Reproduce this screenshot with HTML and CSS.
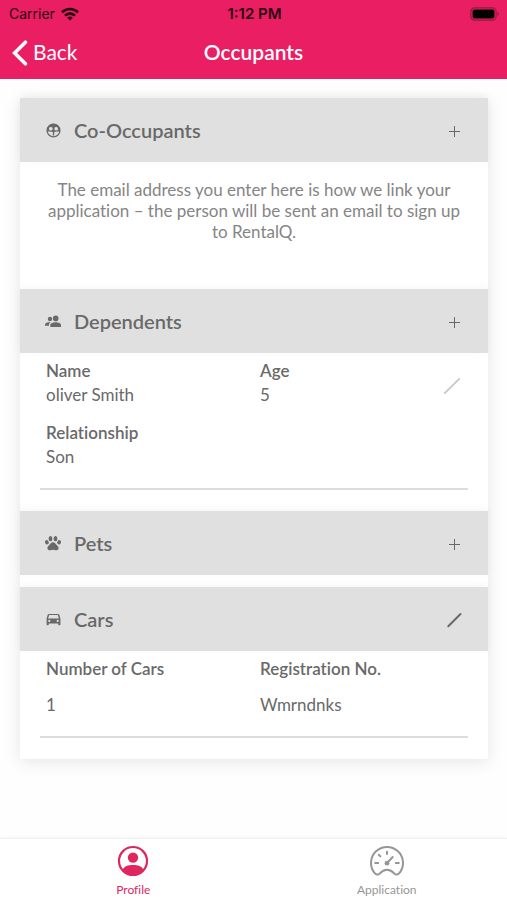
FILE: index.html
```html
<!DOCTYPE html>
<html lang="en">
<head>
<meta charset="utf-8">
<meta name="viewport" content="width=device-width, initial-scale=1">
<title>Occupants</title>
<link rel="stylesheet" href="styles.css">
</head>
<body>
<div class="app">
  <header class="top">
    <div class="status">
      <span class="carrier">Carrier
        <svg width="18" height="14" viewBox="0 0 18 14" aria-hidden="true"><g fill="none" stroke="currentColor" stroke-width="2.6"><path d="M1 5.2a11.5 11.5 0 0 1 16 0"/><path d="M4 8.6a7.2 7.2 0 0 1 10 0"/></g><path d="M9 13.6 6.2 10.8a4 4 0 0 1 5.6 0z" fill="currentColor"/></svg>
      </span>
      <span class="time">1:12 PM</span>
      <span class="battery"><svg width="30" height="14" viewBox="0 0 30 14" aria-hidden="true"><rect x=".9" y=".9" width="25.2" height="12.2" rx="3.6" fill="none" stroke="#8f1a42" stroke-width="1.2"/><rect x="2.6" y="2.6" width="21.8" height="8.8" rx="2" fill="#000"/><path d="M27.6 4.8a2.6 2.6 0 0 1 0 4.4z" fill="#8f1a42"/></svg></span>
    </div>
    <nav class="bar">
      <a class="back" href="#"><svg width="16" height="26" viewBox="0 0 16 26" aria-hidden="true"><path d="M13.4 2.2 2.6 13l10.8 10.8" fill="none" stroke="currentColor" stroke-width="3.6" stroke-linecap="round" stroke-linejoin="miter"/></svg><span>Back</span></a>
      <h1>Occupants</h1>
    </nav>
  </header>

  <main class="content">
    <div class="card">
      <section>
        <div class="head">
          <svg class="icon" viewBox="0 0 16 16" aria-hidden="true"><circle cx="8.500" cy="8.500" r="6.400" fill="none" stroke="currentColor" stroke-width="1.300"/><path d="M2.200 6.500C3 3.500 5.500 1.800 8.500 1.800s5.500 1.700 6.300 4.700l.3 3.300c-1.800-.6-3.900-.5-5.900.2v3.500H7.800V10c-2-.7-4.100-.8-5.900-.2z" fill="currentColor"/><g fill="#e0e0e0"><rect x="4" y="5" width="3.600" height="3.600" rx="1.500"/><rect x="9.400" y="5" width="3.600" height="3.600" rx="1.500"/></g></svg>
          <h2>Co-Occupants</h2>
          <button type="button" aria-label="Add co-occupant"><svg viewBox="0 0 20 20" aria-hidden="true"><path d="M10.500 6v11M5 11.500h11" stroke="currentColor" stroke-width="1"/></svg></button>
        </div>
        <p class="note">The email address you enter here is how we link your application – the person will be sent an email to sign up to RentalQ.</p>
      </section>

      <section>
        <div class="head">
          <svg class="icon" viewBox="0 0 16 16" aria-hidden="true"><g fill="currentColor"><circle cx="5" cy="6" r="2.200"/><circle cx="10.700" cy="5.400" r="2.800"/><path d="M5.300 14v-2.200c0-1.600 2.600-2.600 5.400-2.600s5.300 1 5.300 2.600V14z"/><path d="M0 12.800v-1.500c0-1.500 2.300-2.500 5.700-2.400-1.200.7-1.700 1.600-1.700 2.700v1.200z"/></g></svg>
          <h2>Dependents</h2>
          <button type="button" aria-label="Add dependent"><svg viewBox="0 0 20 20" aria-hidden="true"><path d="M10.500 6v11M5 11.500h11" stroke="currentColor" stroke-width="1"/></svg></button>
        </div>
        <div class="record">
          <dl class="fields">
            <div><dt>Name</dt><dd>oliver Smith</dd></div>
            <div><dt>Age</dt><dd>5</dd></div>
            <div><dt>Relationship</dt><dd>Son</dd></div>
          </dl>
          <button class="edit" type="button" aria-label="Edit dependent"><svg viewBox="0 0 20 20" aria-hidden="true"><path d="M2.800 17.200 17.200 2.800" stroke="currentColor" stroke-width="1.800" stroke-linecap="round"/></svg></button>
        </div>
      </section>

      <section class="closed">
        <div class="head">
          <svg class="icon" viewBox="0 0 16 16" aria-hidden="true"><g fill="currentColor"><ellipse cx="1.900" cy="7.300" rx="1.800" ry="2.200" transform="rotate(-20 1.900 7.300)"/><ellipse cx="5.500" cy="3.700" rx="1.900" ry="2.600"/><ellipse cx="10.500" cy="3.700" rx="1.900" ry="2.600"/><ellipse cx="14.100" cy="7.300" rx="1.800" ry="2.200" transform="rotate(20 14.100 7.300)"/><path d="M8 7.300c1.700 0 2.600 1.600 3.700 2.800 1 1 2.200 2 1.900 3.400-.3 1.400-1.700 1.900-2.900 1.700-.9-.2-1.700-.5-2.700-.5s-1.800.3-2.700.5c-1.200.2-2.600-.3-2.900-1.700-.3-1.400.9-2.400 1.900-3.400C5.400 8.900 6.300 7.300 8 7.300z"/></g></svg>
          <h2>Pets</h2>
          <button type="button" aria-label="Add pet"><svg viewBox="0 0 20 20" aria-hidden="true"><path d="M10.500 6v11M5 11.500h11" stroke="currentColor" stroke-width="1"/></svg></button>
        </div>
      </section>

      <section>
        <div class="head">
          <svg class="icon" viewBox="0 0 16 16" aria-hidden="true"><path fill="currentColor" fill-rule="evenodd" d="M4 3h9c.7 0 1.200.4 1.400 1l1 3.600V13.500c0 .5-.3.800-.7.800h-.8c-.4 0-.7-.3-.7-.8v-.9H3.800v.9c0 .5-.3.800-.7.800h-.8c-.4 0-.7-.3-.7-.8V7.600l1-3.600c.2-.6.700-1 1.400-1zM4.200 4 3.100 7.400h10.800L12.800 4zM4.300 8.800a1.100 1.100 0 1 0 0 2.200 1.100 1.100 0 0 0 0-2.200zm8.400 0a1.100 1.100 0 1 0 0 2.200 1.100 1.100 0 0 0 0-2.200z"/></svg>
          <h2>Cars</h2>
          <button type="button" aria-label="Edit cars"><svg viewBox="0 0 20 20" aria-hidden="true"><path d="M4.300 17.200 16.500 5" stroke="currentColor" stroke-width="2" stroke-linecap="round"/></svg></button>
        </div>
        <div class="record">
          <dl class="fields spaced">
            <div><dt>Number of Cars</dt><dd>1</dd></div>
            <div><dt>Registration No.</dt><dd>Wmrndnks</dd></div>
          </dl>
        </div>
      </section>
    </div>
  </main>

  <nav class="tabs">
    <a class="tab current" href="#"><svg width="36" height="34" viewBox="0 0 36 34" aria-hidden="true"><circle cx="18" cy="17" r="14" fill="none" stroke="currentColor" stroke-width="2.200"/><circle cx="18" cy="13.600" r="5.200" fill="currentColor"/><path d="M7.500 26c1.600-3.800 5.500-5 10.500-5s8.900 1.200 10.500 5c-2.400 3.200-6.200 5-10.500 5s-8.100-1.800-10.500-5z" fill="currentColor"/></svg>Profile</a>
    <a class="tab" href="#"><svg width="36" height="34" viewBox="0 0 36 34" aria-hidden="true"><g fill="none" stroke="currentColor" stroke-width="2" stroke-linecap="round" stroke-linejoin="round"><path d="M5 28.300A16 16 0 1 1 31 28.300c-1.600 2.400-4 3-5.600 1.300-2-2.200-4.200-3.900-7.400-3.900s-5.400 1.700-7.400 3.900C9 31.300 6.600 30.700 5 28.300z"/><path d="M18 7.700v2.300M9.700 10.700l1.700 1.700M6.200 19h3M26.800 19h3"/><path d="m18.500 18.500 5.200-5.500"/></g><circle cx="18" cy="19.200" r="2.400" fill="currentColor"/></svg>Application</a>
  </nav>
</div>
</body>
</html>
```
FILE: styles.css
```css
* { box-sizing: border-box; }

body {
  margin: 0;
  background: #fefefe;
  color: #696969;
  font-family: Lato, "Open Sans", sans-serif;
  font-variant-ligatures: none;
}

h1, h2, p, dl, dd { margin: 0; }

a { color: inherit; text-decoration: none; }

svg { display: block; }

button {
  padding: 0;
  border: 0;
  background: none;
  color: inherit;
  cursor: pointer;
}

button svg { width: 20px; height: 20px; }

.app {
  display: flex;
  flex-direction: column;
  min-height: 100vh;
}

.top { background: #e91e63; }

.status {
  display: grid;
  grid-template-columns: 1fr auto 1fr;
  align-items: center;
  height: 27px;
  padding: 0 7px 0 9px;
  color: #2b0511;
  font: 14px Inter, sans-serif;
}

.carrier { display: flex; align-items: center; gap: 6px; }

.time { font-size: 15px; font-weight: 600; }

.battery { justify-self: end; }

.bar {
  display: grid;
  grid-template-columns: 1fr auto 1fr;
  align-items: center;
  height: 52px;
  padding: 0 12px;
  color: #fff;
}

.back {
  display: flex;
  align-items: center;
  gap: 5px;
  font-size: 21px;
}

.back span, .bar h1 { padding-bottom: 3px; }

.bar h1 { font-size: 21px; font-weight: 600; }

.content { flex: 1; padding: 19px 19px 20px 20px; }

.card {
  background: #fff;
  box-shadow: 0 3px 16px rgba(0, 0, 0, 0.1);
}

.head {
  display: flex;
  align-items: center;
  height: 64px;
  padding: 0 24px 1px 25px;
  background: #e0e0e0;
  box-shadow: 0 -2px 8px rgba(0, 0, 0, 0.04);
}

.icon { width: 16px; height: 16px; margin-right: 13px; }

.head h2 { flex: 1; font-size: 20px; font-weight: 600; }

.note {
  padding: 17px 20px 47px;
  color: #858585;
  font-size: 17px;
  line-height: 21px;
  text-align: center;
}

.closed { padding-bottom: 12px; }

.record { position: relative; padding: 6px 20px 21px; }

.fields {
  display: grid;
  grid-template-columns: 1fr 1fr;
  row-gap: 14px;
  padding: 0 0 19px 6px;
  column-gap: 6px;
  border-bottom: 2px solid #dcdcdc;
  font-size: 17px;
  line-height: 24px;
}

.fields dt { font-weight: 600; }

.spaced dd { margin-top: 12px; }

.edit {
  position: absolute;
  top: 23px;
  right: 26px;
  color: #c8c8c8;
}

.tabs {
  display: grid;
  grid-template-columns: 1fr 1fr;
  height: 62px;
  border-top: 1px solid #f0f0f0;
  background: #fff;
  box-shadow: 0 -1px 3px rgba(0, 0, 0, 0.03);
}

.tab {
  display: flex;
  flex-direction: column;
  align-items: center;
  padding: 5px 0 0 13px;
  color: #969696;
  font-size: 12px;
  line-height: 24px;
}

.tab.current { color: #e0265f; }
```
